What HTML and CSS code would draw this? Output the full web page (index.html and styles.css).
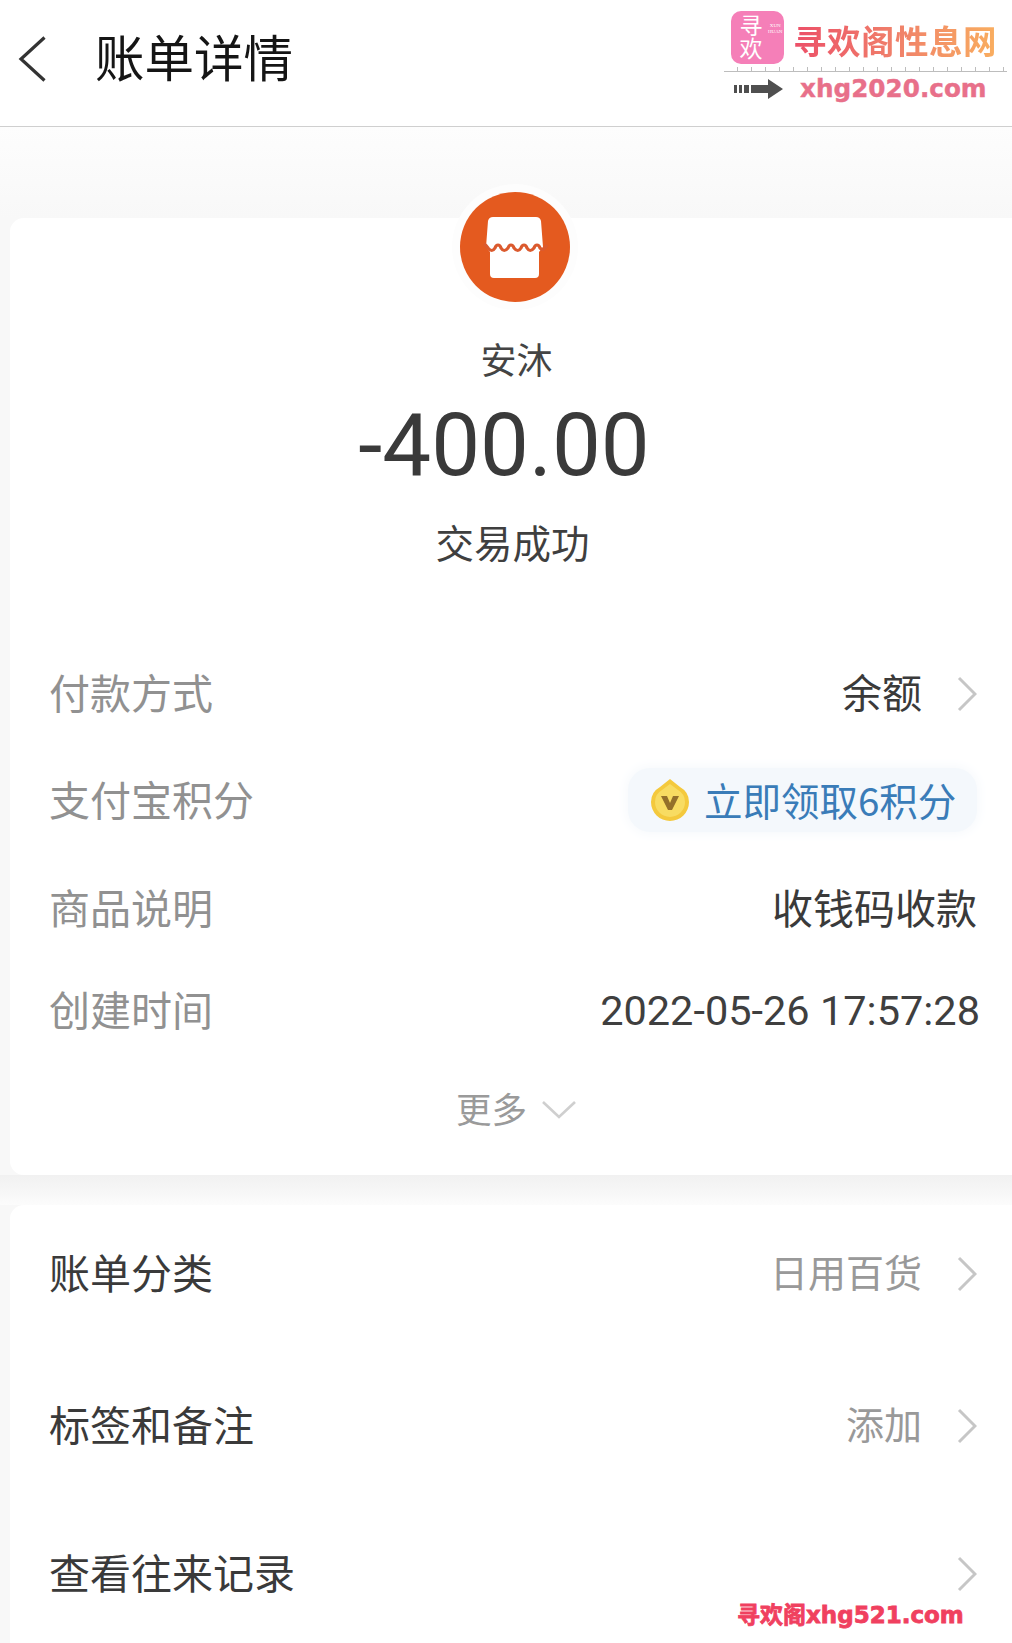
FILE: index.html
```html
<!DOCTYPE html>
<html lang="zh-CN">
<head>
<meta charset="utf-8">
<title>账单详情</title>
<link rel="stylesheet" href="styles.css">
</head>
<body>
<div class="page">
  <header class="topbar">
    <svg class="back" viewBox="0 0 28 46" width="28" height="46"><path d="M26.5 1.5 3 23l23.500 21.500" fill="none" stroke="#333" stroke-width="3.2"/></svg>
    <h1 class="title">账单详情</h1>
  </header>

  <aside class="brand">
    <div class="brand-top">
      <div class="brand-icon">
        <span class="brand-icon-cn">寻欢</span>
        <span class="brand-icon-en">XUN<br>HUAN</span>
      </div>
      <div class="brand-name">寻欢阁性息网</div>
    </div>
    <div class="ruler"></div>
    <div class="brand-bottom">
      <svg class="brand-arrow" viewBox="0 0 49 20" width="49" height="20"><path d="M0 6h3v8H0zM5 6h3v8H5zM10 6h5v8h-5zM17 6h17V0l15 10-15 10v-6H17z" fill="#4f4f4f"/></svg>
      <span class="brand-url">xhg2020.com</span>
    </div>
  </aside>

  <main class="content">
    <section class="card card-main">
      <div class="avatar">
        <svg viewBox="0 0 110 110" width="110" height="110">
          <circle cx="55" cy="55" r="55" fill="#e45a1f"/>
          <path d="M33 25h43q4 0 5 4l2 26-4 5v22q0 4-4 4H34q-4 0-4-4V60l-4-5 2-26q1-4 5-4z" fill="#fff"/>
          <path d="M24 52q2 1 4 4q4 5 7 0q1-3 3-3t3 3q3 5 7 0q1-3 3-3t3 3q4 5 7 0q1-3 3-3t3 3q3 5 7 0q1-3 3-3t3 3q3 4 7-3" fill="none" stroke="#db5a2e" stroke-width="3.200"/>
        </svg>
      </div>
      <div class="name">安沐</div>
      <div class="amount">-400.00</div>
      <div class="status">交易成功</div>

      <div class="row row-first">
        <span class="label">付款方式</span>
        <span class="value-link"><span class="value">余额</span><svg class="chev" viewBox="0 0 20 36" width="20" height="36"><path d="M2 2l16 16L2 34" fill="none" stroke="#c6c6c6" stroke-width="3"/></svg></span>
      </div>
      <div class="row row-next">
        <span class="label">支付宝积分</span>
        <span class="chip">
          <svg class="coin" viewBox="0 0 40 44" width="40" height="44">
            <path d="M20 1 30 9q9 5 9 15a19 19 0 0 1-38 0Q1 14 10 9z" fill="#f4c93d"/>
            <path d="M20 6 28 12q7 4 7 12a15 15 0 0 1-30 0q0-8 7-12z" fill="#f8dc62"/>
            <path d="M11 18h6l3 7 3-7h6l-7 14h-4z" fill="#94702a"/>
          </svg>
          <span class="chip-text">立即领取6积分</span>
        </span>
      </div>
      <div class="row row-next">
        <span class="label">商品说明</span>
        <span class="value value-wide">收钱码收款</span>
      </div>
      <div class="row row-last">
        <span class="label">创建时间</span>
        <span class="date">2022-05-26 17:57:28</span>
      </div>
      <div class="more">
        <span>更多</span>
        <svg class="more-chev" viewBox="0 0 36 20" width="36" height="20"><path d="M2 2l16 15L34 2" fill="none" stroke="#cfcfcf" stroke-width="2.600"/></svg>
      </div>
    </section>

    <div class="gap"></div>

    <section class="card card-list">
      <div class="row">
        <span class="label label-dark">账单分类</span>
        <span class="value-link"><span class="value value-muted">日用百货</span><svg class="chev" viewBox="0 0 20 36" width="20" height="36"><path d="M2 2l16 16L2 34" fill="none" stroke="#c6c6c6" stroke-width="3"/></svg></span>
      </div>
      <div class="row row-tag">
        <span class="label label-dark">标签和备注</span>
        <span class="value-link"><span class="value value-muted">添加</span><svg class="chev" viewBox="0 0 20 36" width="20" height="36"><path d="M2 2l16 16L2 34" fill="none" stroke="#c6c6c6" stroke-width="3"/></svg></span>
      </div>
      <div class="row row-history">
        <span class="label label-dark">查看往来记录</span>
        <span class="value-link"><svg class="chev" viewBox="0 0 20 36" width="20" height="36"><path d="M2 2l16 16L2 34" fill="none" stroke="#c6c6c6" stroke-width="3"/></svg></span>
      </div>
    </section>
  </main>

  <div class="watermark">寻欢阁xhg521.com</div>
</div>
</body>
</html>
```

FILE: styles.css
```css
* { box-sizing: border-box; }

html, body {
  margin: 0;
  padding: 0;
  background: #fff;
}

.page {
  position: relative;
  width: 1012px;
  height: 1643px;
  overflow: hidden;
  font-family: "Noto Sans CJK SC", "Liberation Sans", sans-serif;
  color: #333;
  background: #fff;
}

.topbar {
  display: flex;
  align-items: center;
  gap: 49px;
  height: 127px;
  padding: 0 0 8px 18px;
  background: #fff;
  border-bottom: 1px solid #cfcfcf;
}

.back { flex: none; }

.title {
  margin: 0 0 6px;
  font-size: 49.500px;
  line-height: 60px;
  font-weight: 400;
  color: #151515;
}

.brand {
  position: absolute;
  left: 724px;
  top: 11px;
  width: 283px;
}

.brand-top {
  display: flex;
  align-items: center;
  gap: 9px;
  padding-left: 7px;
}

.brand-icon {
  position: relative;
  flex: none;
  width: 53px;
  height: 53px;
  border-radius: 10px;
  background: #f57fb8;
  color: #fff;
}

.brand-icon-cn {
  position: absolute;
  left: 4px;
  top: 3px;
  writing-mode: vertical-rl;
  font-size: 23px;
  line-height: 32px;
}

.brand-icon-en {
  position: absolute;
  left: 37px;
  top: 12px;
  font-family: "Liberation Serif", serif;
  font-size: 5px;
  line-height: 6px;
  text-align: center;
}

.brand-name {
  margin-top: 5px;
  font-size: 33.500px;
  line-height: 44px;
  font-weight: 700;
  letter-spacing: 0.5px;
  white-space: nowrap;
  background: linear-gradient(90deg, #ec4f68 0%, #f0806a 50%, #f9ae5f 100%);
  -webkit-background-clip: text;
  background-clip: text;
  color: transparent;
}

.ruler {
  height: 8px;
  border-bottom: 1px solid #bdbdbd;
  background-image: repeating-linear-gradient(90deg, transparent 0 13px, #bdbdbd 13px 14px);
  background-size: 100% 4px;
  background-position: 0 100%;
  background-repeat: no-repeat;
}

.brand-bottom {
  display: flex;
  align-items: center;
  gap: 17px;
  padding: 3px 0 0 10px;
}

.brand-arrow { flex: none; }

.brand-url {
  font-family: "DejaVu Sans", sans-serif;
  font-size: 24.700px;
  line-height: 28px;
  font-weight: 700;
  color: #e8708a;
  -webkit-text-stroke: 0.4px #e8708a;
  white-space: nowrap;
}

.content {
  padding-top: 91px;
  background: linear-gradient(180deg, #fdfdfd 0, #f8f8f8 91px, #f8f8f8 100%);
}

.card {
  display: flow-root;
  margin-left: 10px;
  background: #fff;
  border-radius: 14px 0 0 14px;
}

.card-main {
  height: 957px;
  padding: 0 35px 0 39px;
}

.card-list {
  height: 440px;
  padding: 38px 35px 0 39px;
  border-radius: 14px 0 0 0;
}

.gap {
  height: 30px;
  background: linear-gradient(180deg, #f1f1f1 0, #f6f6f6 50%, #fcfcfc 100%);
}

.avatar {
  width: 110px;
  height: 110px;
  margin: -26px auto 0 411px;
  border-radius: 50%;
  box-shadow: 0 0 0 8px #fdfdfd;
}

.avatar svg { display: block; }

.name {
  margin-top: 31px;
  padding-left: 7px;
  font-size: 36px;
  line-height: 50px;
  text-align: center;
  color: #444;
}

.amount {
  margin-top: 12px;
  padding-right: 18px;
  font-family: Roboto, "Liberation Sans", sans-serif;
  font-size: 87px;
  line-height: 100px;
  text-align: center;
  color: #3a3a3a;
}

.status {
  margin-top: 21px;
  padding-right: 1px;
  font-size: 38.500px;
  line-height: 50px;
  text-align: center;
  color: #3f3f3f;
}

.row {
  display: flex;
  align-items: center;
  justify-content: space-between;
  height: 60px;
}

.row-first { margin-top: 97px; }
.row-next { margin-top: 47px; }
.row-next + .row-next { margin-top: 48px; }
.row-last { margin-top: 42px; }
.row-tag { margin-top: 92px; }
.row-history { margin-top: 88px; }

.label {
  padding-bottom: 4px;
  font-size: 41px;
  line-height: 60px;
  color: #919191;
}

.label-dark { color: #3a3a3a; }

.value {
  padding-bottom: 4px;
  font-size: 40px;
  line-height: 60px;
  color: #3a3a3a;
}

.value-wide { font-size: 41px; }

.value-muted {
  font-size: 38px;
  color: #999;
}

.date {
  margin: 2px -3px 0 0;
  font-family: Roboto, "Liberation Sans", sans-serif;
  font-size: 41.500px;
  line-height: 60px;
  color: #3f3f3f;
}

.value-link {
  display: flex;
  align-items: center;
  gap: 35px;
}

.chev {
  flex: none;
  margin-top: 2px;
}

.chip {
  display: flex;
  align-items: center;
  gap: 14px;
  width: 349px;
  height: 64px;
  padding-left: 22px;
  border-radius: 22px;
  background: #f4f8fc;
  box-shadow: 0 0 12px 2px #f6f9fc;
}

.coin { flex: none; }

.chip-text {
  padding-bottom: 3px;
  font-size: 38.500px;
  line-height: 50px;
  color: #3a7cb8;
  white-space: nowrap;
}

.more {
  display: flex;
  align-items: center;
  justify-content: center;
  gap: 14px;
  margin-top: 43px;
  padding-left: 7px;
  font-size: 35.500px;
  line-height: 50px;
  color: #9a9a9a;
}

.more-chev { flex: none; margin-top: 4px; }

.watermark {
  position: absolute;
  left: 737px;
  top: 1599px;
  font-family: "DejaVu Sans", "Noto Sans CJK SC", sans-serif;
  font-size: 23px;
  line-height: 32px;
  font-weight: 700;
  color: #f0405f;
  -webkit-text-stroke: 0.8px #f0405f;
  white-space: nowrap;
}
```
